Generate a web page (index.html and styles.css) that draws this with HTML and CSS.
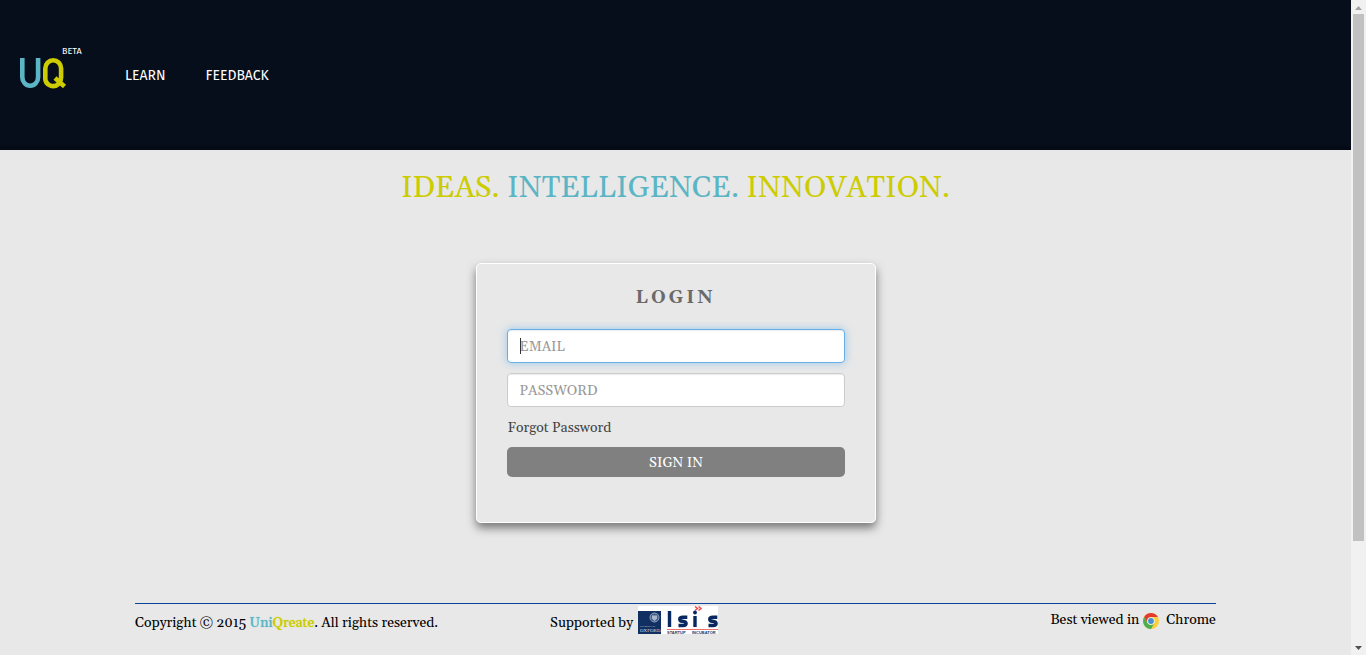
FILE: index.html
```html
<!DOCTYPE html>
<html lang="en">
<head>
<meta charset="utf-8">
<title>UniQreate</title>
<link rel="stylesheet" href="styles.css">
</head>
<body>
<div class="page">
  <header class="header">
    <a class="brand" href="#" aria-label="UniQreate home">
      <svg class="logo" viewBox="0 0 48 32" fill="none" stroke-width="4.6">
        <path class="logo-u" d="M2.300 1V20.200a7.900 8.500 0 0 0 15.800 0V1"/>
        <path class="logo-q" d="M38.500 27A7.900 7.900 0 0 1 25.300 20.500V11.500a7.900 8.200 0 0 1 15.800 0V20.500Q41.100 23 39.500 25M35 21L44.500 29.500"/>
      </svg>
      <span class="beta">BETA</span>
    </a>
    <nav class="nav">
      <a href="#">LEARN</a>
      <a href="#">FEEDBACK</a>
    </nav>
  </header>
  <main class="main">
    <h1 class="tagline"><span class="lime">IDEAS.</span> <span class="teal">INTELLIGENCE.</span> <span class="lime">INNOVATION.</span></h1>
    <form class="card">
      <h2 class="card-title">LOGIN</h2>
      <div class="field field-active"><input class="input" type="email" placeholder="EMAIL" aria-label="Email"></div>
      <div class="field"><input class="input" type="password" placeholder="PASSWORD" aria-label="Password"></div>
      <a class="forgot" href="#">Forgot Password</a>
      <button class="submit" type="button">SIGN IN</button>
    </form>
  </main>
  <footer class="footer">
    <p class="copyright">Copyright © 2015 <b class="name teal">Uni</b><b class="name lime">Qreate</b>. All rights reserved.</p>
    <p class="support">Supported by
      <svg class="isis" viewBox="0 0 80 28" role="img" aria-label="Isis Startup Incubator, University of Oxford">
        <path fill="#fff" d="M0 0h80v28H0z"/>
        <path fill="#122f61" d="M0 5h23v23H0z"/>
        <circle cx="16.500" cy="11.500" r="4.500" fill="#44618c" stroke="#8fa2bf"/>
        <path d="M14 9.500h5v3l-2.500 2.500-2.500-2.500z" fill="#a9b7cc"/>
        <text class="isis-tiny" x="2" y="21">UNIVERSITY OF</text>
        <text class="isis-oxford" x="2" y="26">OXFORD</text>
        <g fill="none" stroke="#08285f" stroke-width="3.400"><path d="M31.500 5v16M57 10v11"/><path id="s" d="M49.300 11.300h-4.300c-4.500 0-4 3.600-.5 4 5 .5 4.500 4.200.5 4.200h-4.500"/><path d="M79.300 11.300h-4.300c-4.500 0-4 3.600-.5 4 5 .5 4.500 4.200.5 4.200h-4.500"/></g>
        <circle cx="57" cy="6.500" r="1.900" fill="#08285f"/>
        <path d="M57 .5l2.500 2-2.500 2M60.500 .5l2.500 2-2.500 2" fill="none" stroke="#f04b4b" stroke-width="1.500"/>
        <path d="M29 23.500h51" stroke="#ee6f6d"/>
        <text class="isis-sub" x="29" y="28">STARTUP</text><text class="isis-sub" x="54" y="28">INCUBATOR</text>
      </svg>
    </p>
    <p class="browser">Best viewed in
      <svg class="chrome" viewBox="0 0 16 16" aria-hidden="true">
        <circle cx="8" cy="8" r="8" fill="#fbd03b"/>
        <path fill="#e33b2e" d="M1.100 4A8 8 0 0 1 14.900 4H8a4 4 0 0 0-3.500 6z"/>
        <path fill="#4caf50" d="M1.100 4A8 8 0 0 0 8 16l3.500-6a4 4 0 0 1-7 0z"/>
        <circle cx="8" cy="8" r="3.800" fill="#eef3f5"/><circle cx="8" cy="8" r="2.900" fill="#4a90cf"/>
      </svg>
      <span>Chrome</span></p>
  </footer>
</div>
<div class="scroll" aria-hidden="true">
  <svg class="arrow" viewBox="0 0 15 14"><path fill="#a3a3a3" d="M4 10h7L7.500 6z"/></svg>
  <div class="track"><div class="thumb"></div></div>
  <svg class="arrow" viewBox="0 0 15 14"><path fill="#505050" d="M4 5h7L7.500 9z"/></svg>
</div>
</body>
</html>
```
FILE: styles.css
```css
* { box-sizing: border-box; }
body {
  margin: 0;
  min-height: 100vh;
  display: grid;
  grid-template-columns: 1fr 15px;
  background: #e8e8e8;
  color: #000;
  font: 14px/20px Georgia, Gelasio, "Liberation Serif", serif;
}
a { color: inherit; text-decoration: none; }
h1, h2, p { margin: 0; font-weight: normal; }
.page { display: flex; flex-direction: column; }
.teal { color: #5bb5c4; }
.lime { color: #cccc00; }

.header {
  display: flex;
  align-items: flex-start;
  height: 150px;
  padding: 45px 20px 0;
  background: #060d1b;
  border-bottom: 4px solid #040a16;
  color: #fff;
  font-family: "Trebuchet MS", "Fira Sans", "Open Sans", sans-serif;
}
.brand { display: flex; width: 105px; }
.logo { width: 48px; height: 32px; margin: 12px -6px 0 0; }
.logo-u { stroke: #5bb5c4; }
.logo-q { stroke: #cccc00; }
.beta { font-size: 9px; line-height: 12px; }
.nav { display: flex; gap: 40px; padding-top: 21px; font-size: 14px; }

.main { display: flex; flex-direction: column; align-items: center; }
.tagline { padding-top: 22px; font-size: 30px; line-height: 33px; }
.card {
  display: flex;
  flex-direction: column;
  width: 400px;
  height: 260px;
  margin-top: 58px;
  padding: 21px 30px;
  border: 1px solid #fff;
  border-radius: 5px;
  box-shadow: 0 5px 10px #777;
}
.card-title {
  margin-bottom: 19px;
  color: #6a6a6a;
  font-size: 18px;
  line-height: 25px;
  font-weight: bold;
  letter-spacing: 3px;
  text-align: center;
}
.field { position: relative; margin-bottom: 10px; }
.input {
  display: block;
  width: 100%;
  height: 34px;
  padding: 7px 12px 5px;
  border: 1px solid #ccc;
  border-radius: 4px;
  background: #fff;
  box-shadow: inset 0 1px 1px rgba(0, 0, 0, .08);
  font: inherit;
}
.input::placeholder { color: #999; opacity: 1; }
.field-active .input {
  border-color: #66afe9;
  box-shadow: inset 0 1px 1px rgba(0, 0, 0, .08), 0 0 8px rgba(102, 175, 233, .6);
}
.field-active::after {
  content: "";
  position: absolute;
  left: 13px;
  top: 9px;
  width: 1px;
  height: 16px;
  background: #333;
}
.forgot { align-self: flex-start; padding: 1px 0 0 1px; margin-bottom: 9px; color: #444; }
.submit {
  height: 30px;
  padding: 2px 0 0 1px;
  border: 0;
  border-radius: 5px;
  background: #808080;
  color: #fff;
  font: inherit;
}

.footer {
  display: grid;
  grid-template-columns: 303px 1fr 303px;
  width: 80%;
  margin: 80px auto 0;
  border-top: 1px solid #0a449b;
}
.copyright { padding-top: 9px; white-space: nowrap; }
.name { font-weight: normal; text-shadow: 0 0 1px currentColor; }
.support { display: flex; gap: 5px; padding: 2px 0 0 112px; line-height: 34px; white-space: nowrap; }
.isis { width: 80px; height: 28px; }
.isis text { font-family: "Liberation Sans", sans-serif; fill: #193865; }
.isis .isis-tiny { font-size: 2px; fill: #b2bfd0; }
.isis .isis-oxford { font: 5px "Liberation Serif", serif; fill: #d4dce6; }
.isis .isis-sub { font-size: 4px; font-weight: bold; }
.browser { display: flex; align-items: flex-start; justify-content: flex-end; padding-top: 6px; }
.chrome { width: 16px; height: 16px; margin: 3px 7px 0 4px; }

.scroll { display: flex; flex-direction: column; background: #f1f1f1; }
.arrow { width: 15px; height: 14px; }
.track { flex: 1; padding: 0 2px; }
.thumb { height: 84%; background: #c1c1c1; }
```
